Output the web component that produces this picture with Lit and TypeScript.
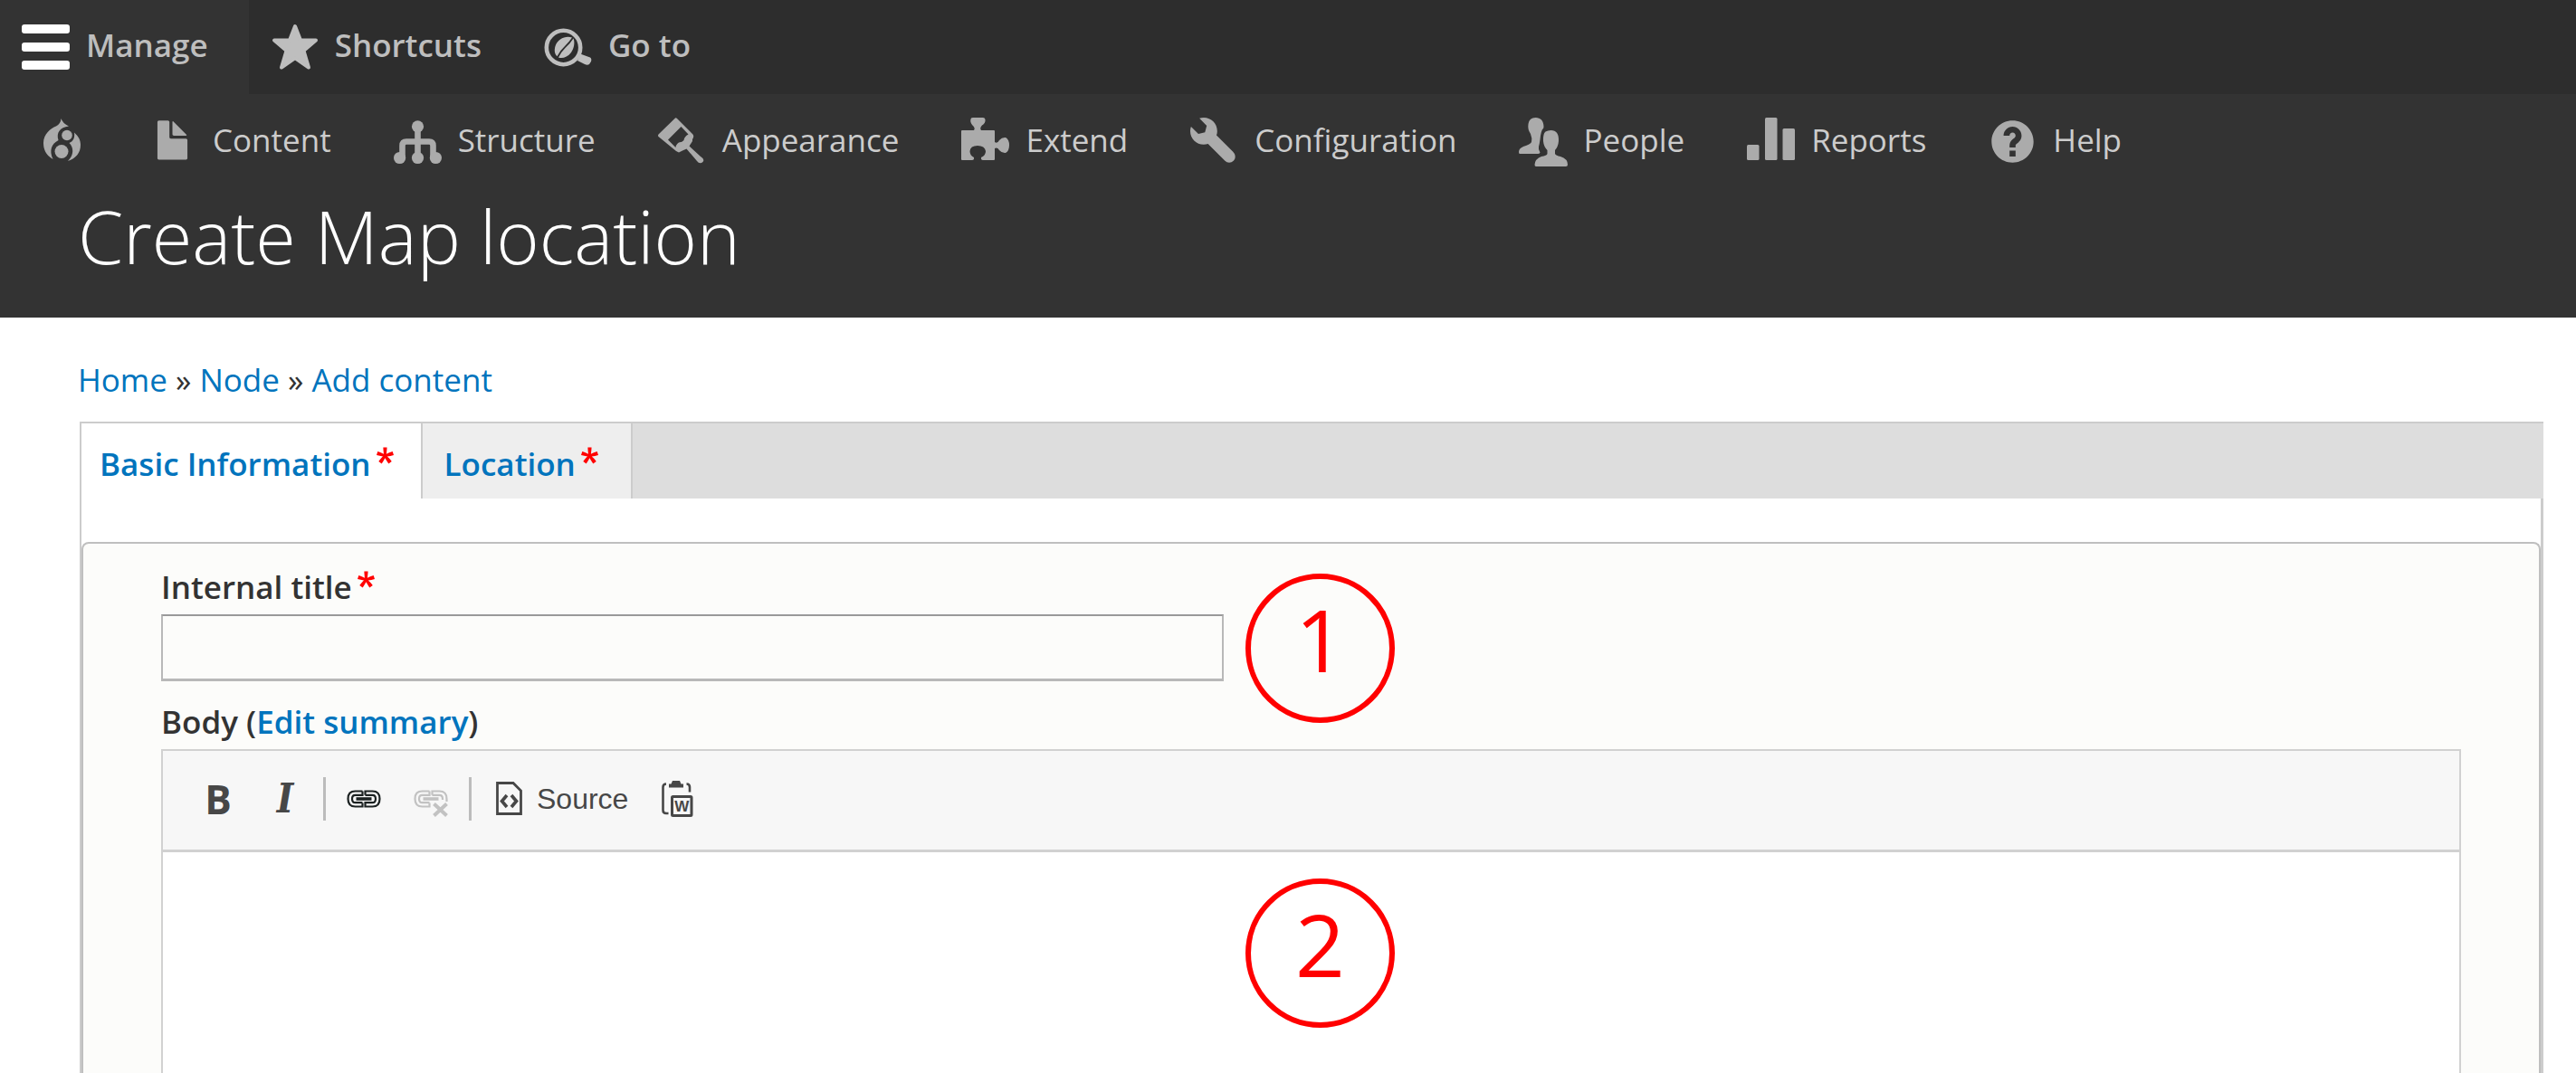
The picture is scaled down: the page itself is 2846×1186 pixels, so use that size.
import { LitElement, html, css, svg, nothing, TemplateResult } from "lit";
import { customElement, property, state } from "lit/decorators.js";

const glyphs: Record<string, TemplateResult> = {
  bars: svg`<rect x="0" y="1" width="53" height="10" rx="3"/><rect x="0" y="21" width="53" height="10" rx="3"/><rect x="0" y="41" width="53" height="10" rx="3"/>`,
  star: svg`<path d="M27 3L33 18.500H50L36.500 30L42 48.500L27 38L12 48.500L17.500 30L4 18.500H21Z" stroke="currentColor" stroke-width="4" stroke-linejoin="round"/>`,
  goto: svg`<circle cx="21.500" cy="26.500" r="18.700" fill="none" stroke="currentColor" stroke-width="4.600"/>
    <path d="M37 41L40 33.500L51 37.500Q53 39 52 42L50 45Q48 46.500 45 45Z"/>
    <path d="M31 15.500C24 13 15 17 12.500 25C11 30 12 34 14.500 36.200Q17.500 30 23 25Q28 20 31 15.500ZM32.500 16.500C34.500 21 33 28 30 32C26 37.500 20 39 16 37.500Q18.500 32 23.500 27Q29 22 32.500 16.500Z"/>`,
  drop: svg`<path d="M25.500 1Q27 6 34 9.500C24 10.500 20 17 22.500 25C15 29 12 36 16.500 46C8 41 6 34 6 28C6 18 14 12 20 9.500Q25 7 25.500 1Z"/>
    <circle cx="32" cy="19.500" r="5.800"/><circle cx="26" cy="37.500" r="7.500"/>
    <path d="M40 16.500C45 21 47 25 47 30C47 39 42 45 33 48C40 41 39.500 33 34.500 28C38.500 26.500 41 22.500 40 16.500Z"/>`,
  file: svg`<g transform="scale(3.3125)"><path d="M12.502 7h-5c-.276 0-.502-.225-.502-.5v-5c0-.275-.225-.5-.5-.5h-3c-.275 0-.5.225-.5.5v12.029c0 .275.225.5.5.5h9.002c.275 0 .5-.225.5-.5v-6.029c0-.275-.225-.5-.5-.5zM8.502 6h4c.275 0 .34-.159.146-.354l-4.293-4.292c-.195-.195-.353-.129-.353.146v4c0 .275.225.5.5.5z"/></g>`,
  chart: svg`<path d="M26.500 10V44M9.500 44V31Q9.500 26.500 14 26.500H39Q43.500 26.500 43.500 31V44" fill="none" stroke="currentColor" stroke-width="6.600"/>
    <circle cx="26.500" cy="9.800" r="6.600"/><circle cx="6.600" cy="44.500" r="6.600"/><circle cx="26.500" cy="44.500" r="6.600"/><circle cx="46.400" cy="44.500" r="6.600"/>`,
  brush: svg`<path fill-rule="evenodd" d="M19 .5Q20 0 21 1L38 18Q40.500 20 38 24V26L34.500 31.500L47 43Q52 46 49.500 49Q46 52 43 48L31.500 34.500L27 36.500L23 38.500L20 37L.5 21Q-.5 20 .5 18.500ZM25.500 10L11 24.500L19.500 33Q19.500 30 23 27.500Q27 27 28.500 25Q29 21 33.500 18.500Z"/>`,
  puzzle: svg`<path d="M0 15Q0 14 1 14H14Q16 11.500 12 8Q9 4 11 .5Q11.500 0 13 0H24Q26 0 26.500 2Q27 6 23 8.500Q20 11.500 22 14H36Q37 14 37 15V27Q40 29 42 25Q45 21.500 49 22Q53 24 53 30.500Q53 37 49 39Q45 39.500 42 36Q40 32.500 37 34V46Q37 47 36 47H24Q21.500 47 22 44Q27 42 27 37Q26 31 18 31Q10 31 9.500 37Q9.500 42 14 44Q14.500 47 12 47H1Q0 47 0 46Z"/>`,
  wrench: svg`<g transform="scale(3.3125)"><path d="M14.416 11.586l-.01-.008v-.001l-5.656-5.656c.15-.449.252-.921.252-1.421 0-2.485-2.016-4.5-4.502-4.5-.505 0-.981.102-1.434.255l2.431 2.431-.588 2.196-2.196.588-2.445-2.445c-.162.464-.268.956-.268 1.475 0 2.486 2.014 4.5 4.5 4.500.5 0 .972-.102 1.421-.251l5.667 5.665c.781.781 2.047.781 2.828 0s.781-2.047 0-2.828z"/></g>`,
  people: svg`<path d="M18.500 0C24 0 27.500 3.500 27.500 10Q27.500 12.500 26 13Q24.500 16 24 20Q23 29 22 32V35L23.500 38.500Q23 40 21 40H1Q0 40 0 38Q0 34 5 32Q13 29.500 14 27Q15 23 13 18Q9.500 13 10.500 7Q11.500 0 18.500 0Z"/>
    <path d="M35.500 14C41.500 14 44.500 18 44 26Q43.500 32 40 36V40Q41 42 46 43Q54 45.500 54 52Q54 54 52 54H19Q17.500 54 17.500 52Q18 45.500 25 43Q31 42 31.500 40V36Q27.500 32 27 26Q26.500 18 29.500 15.500Q32 14 35.500 14Z"/>`,
  reports: svg`<rect x="0" y="30" width="13.500" height="17" rx="1.500"/><rect x="20" y="0" width="13.500" height="47" rx="1.500"/><rect x="39.500" y="12" width="13.500" height="35" rx="1.500"/>`,
  help: svg`<g transform="scale(3.3125)"><path fill-rule="evenodd" d="M8.002 1c-3.868 0-7.002 3.134-7.002 7s3.134 7 7.002 7c3.865 0 7-3.134 7-7s-3.135-7-7-7zm3 5c0 .551-.16 1.085-.477 1.586l-.158.22c-.07.093-.189.241-.361.393-.168.148-.35.299-.545.447l-.203.189-.141.129-.096.17-.021.235v.63h-2.001v-.704c.026-.396.078-.73.204-.999.125-.269.271-.498.439-.688l.225-.21-.01-.015.176-.14.137-.128c.186-.139.357-.277.516-.417l.148-.18c.098-.152.168-.323.168-.518 0-.552-.447-1-1.001-1-.549 0-1.001.448-1.001 1h-1.998c0-1.657 1.343-3 3.001-3 1.655 0 2.998 1.343 2.998 3zm-1.998 7h-2v-2h2z"/></g>`,
};

const icon = (name: string) =>
  html`<svg class="icon" viewBox="0 0 53 53" fill="currentColor" aria-hidden="true">${glyphs[name]}</svg>`;

const required = html`<svg class="required" viewBox="0 0 16 16" role="img" aria-label="required">
  <path fill="#f00" d="M0 7.562l1.114-3.438c2.565.906 4.430 1.688 5.590 2.350C6.398 3.553 6.237 1.544 6.220.447h3.511c-.05 1.597-.234 3.600-.558 6.003c1.664-.838 3.566-1.613 5.714-2.325L16 7.562c-2.050.678-4.060 1.131-6.028 1.356c.984.856 2.372 2.381 4.166 4.575l-2.906 2.059c-.935-1.274-2.041-3.009-3.316-5.206c-1.194 2.275-2.244 4.013-3.147 5.206l-2.856-2.059c1.872-2.307 3.211-3.832 4.017-4.575C3.849 8.516 1.872 8.062 0 7.562"/>
</svg>`;

const links = {
  top: [
    { icon: "bars", label: "Manage", active: true },
    { icon: "star", label: "Shortcuts", active: false },
    { icon: "goto", label: "Go to", active: false },
  ],
  menu: [
    { icon: "file", label: "Content" },
    { icon: "chart", label: "Structure" },
    { icon: "brush", label: "Appearance" },
    { icon: "puzzle", label: "Extend" },
    { icon: "wrench", label: "Configuration" },
    { icon: "people", label: "People" },
    { icon: "reports", label: "Reports" },
    { icon: "help", label: "Help" },
  ],
};

@customElement("admin-toolbar")
class AdminToolbar extends LitElement {
  static styles = css`
    :host {
      display: block;
      color: #bebebe;
      font: 35px/48px "Open Sans", "Noto Sans", sans-serif;
    }
    .bar, .tray { display: flex; }
    .bar { background: #2d2d2d; font-weight: 600; }
    .tray { background: #333; padding-left: 18px; color: #ccc; }
    .item {
      display: flex;
      align-items: center;
      gap: 18px;
      padding: 0 45px 0 24px;
      color: inherit;
      text-decoration: none;
    }
    .bar .item { height: 104px; }
    .tray .item { height: 105px; }
    .name { padding-bottom: 4px; }
    .active { background: #333; }
    .active .icon { color: #fff; }
    .icon { width: 53px; height: 53px; flex: none; overflow: visible; }
    .tray .icon { color: #ababab; }
  `;

  render() {
    return html`
      <nav class="bar" aria-label="Toolbar">
        ${links.top.map(
          (l) => html`<a class="item ${l.active ? "active" : ""}" href="#">${icon(l.icon)}<span class="name">${l.label}</span></a>`
        )}
      </nav>
      <nav class="tray" aria-label="Administration menu">
        <a class="item" href="#" aria-label="Home">${icon("drop")}</a>
        ${links.menu.map((l) => html`<a class="item" href="#">${icon(l.icon)}<span class="name">${l.label}</span></a>`)}
      </nav>
    `;
  }
}

@customElement("step-marker")
class StepMarker extends LitElement {
  @property() value = "";
  static styles = css`
    :host {
      box-sizing: border-box;
      display: flex;
      justify-content: center;
      width: 165px;
      height: 165px;
      border: 6px solid #f00;
      border-radius: 50%;
      color: #f00;
      font: 500 96px/132px "Open Sans", "Noto Sans", sans-serif;
      pointer-events: none;
    }
  `;
  render() {
    return html`${this.value}`;
  }
}

@customElement("rich-editor")
class RichEditor extends LitElement {
  static styles = css`
    :host {
      display: flex;
      flex-direction: column;
      border: 2px solid #d1d1d1;
      border-bottom: 0;
      background: #fff;
    }
    .tools {
      box-sizing: border-box;
      display: flex;
      align-items: center;
      height: 112px;
      padding: 0 24px 4px;
      border-bottom: 3px solid #d1d1d1;
      background: #f7f7f7;
    }
    .tool {
      display: flex;
      align-items: center;
      justify-content: center;
      width: 74px;
      height: 74px;
      padding: 0;
      border: 0;
      background: none;
      color: #474747;
      font: 32px/48px "Liberation Sans", Arial, sans-serif;
    }
    .bold { font: bold 44px/48px "Open Sans", "Noto Sans", sans-serif; }
    .italic { font: italic bold 44px/48px "DejaVu Serif Condensed", "DejaVu Serif", serif; }
    .source { width: auto; gap: 16px; padding: 0 17px 0 22px; }
    .rule { width: 3px; height: 48px; margin: 0 5px; background: #bcbcbc; }
    .glyph { flex: none; overflow: visible; }
    .w { font: bold 17px "Liberation Sans", Arial, sans-serif; }
    .text {
      flex: 1;
      min-height: 200px;
      padding: 24px;
      border: 0;
      outline: 0;
      resize: none;
      background: #fff;
      color: #333;
      font: 32px/48px "Open Sans", "Noto Sans", sans-serif;
    }
  `;

  private link(unlink: boolean) {
    const ink = unlink ? "#c2c2c2" : "#1c2222";
    return html`<svg class="glyph" width="38" height="32" viewBox="0 0 38 32" fill="none" aria-hidden="true">
      <g stroke=${ink} stroke-width="2.200">
        <path d="M17.500 7.500H9.500Q1.500 7.500 1.500 16Q1.500 24.500 9.500 24.500H17.500V20.500"/>
        <path d="M17.500 7.500V11.800H9.500Q6 11.800 6 16Q6 20.200 9.500 20.200H17.500"/>
        <path d=${unlink
          ? "M20.500 11.800V7.500H28.500Q36.500 7.500 36.500 16V19M20.500 11.800H28.500Q32 11.800 32 16V17"
          : "M20.500 11.800V7.500H28.500Q36.500 7.500 36.500 16Q36.500 24.500 28.500 24.500H20.500V20.200H28.500Q32 20.200 32 16Q32 11.800 28.500 11.800H20.500"}/>
      </g>
      <path d="M10.500 16H27.500" stroke=${ink} stroke-width="3.600"/>
      ${unlink ? svg`<path d="M22.500 21.500L36.500 34.500M36.500 21.500L22.500 34.500" stroke=${ink} stroke-width="4"/>` : nothing}
    </svg>`;
  }

  render() {
    return html`
      <div class="tools" role="toolbar" aria-label="Formatting">
        <button class="tool bold" type="button" aria-label="Bold">B</button>
        <button class="tool italic" type="button" aria-label="Italic">I</button>
        <span class="rule"></span>
        <button class="tool" type="button" aria-label="Link">${this.link(false)}</button>
        <button class="tool" type="button" aria-label="Unlink" disabled>${this.link(true)}</button>
        <span class="rule"></span>
        <button class="tool source" type="button">
          <svg class="glyph" width="29" height="37" viewBox="0 0 29 37" fill="none" stroke="#474747" aria-hidden="true">
            <path d="M1.500 1.500H19L27.500 10V35.500H1.500Z" stroke-width="2.800"/>
            <path d="M12 15L6.500 21.500L12 28M17 15L22.500 21.500L17 28" stroke-width="3.600"/>
          </svg>
          <span>Source</span>
        </button>
        <button class="tool" type="button" aria-label="Paste from Word">
          <svg class="glyph" width="35" height="40" viewBox="0 0 35 40" fill="none" stroke="#474747" aria-hidden="true">
            <path d="M5 3.500Q1.500 3.500 1.500 7V32.500Q1.500 36 5 36H7.500M27.500 3.500Q31 3.500 31 7V12.500" stroke-width="2.600"/>
            <path d="M8 7.500V3.500H10.500L12 0H20L21.500 3.500H24V7.500Z" fill="#474747" stroke="none"/>
            <rect x="11.500" y="17.500" width="21.500" height="21" rx="1" stroke-width="3"/>
            <text class="w" x="22.250" y="34" text-anchor="middle" fill="#474747" stroke="none">W</text>
          </svg>
        </button>
      </div>
      <textarea class="text" aria-label="Body"></textarea>
    `;
  }
}

@customElement("app-root")
class AppRoot extends LitElement {
  @state() private tab = 0;

  static styles = css`
    :host {
      display: flex;
      flex-direction: column;
      min-height: 100vh;
      background: #fff;
      color: #333;
      font: 35px/48px "Open Sans", "Noto Sans", sans-serif;
    }
    .heading { padding: 0 86px 38px; background: #333; }
    .title { margin: 0; color: #fff; font-size: 81px; line-height: 104px; font-weight: 300; }
    .main {
      flex: 1;
      display: flex;
      flex-direction: column;
      padding: 45px 0 0;
    }
    .crumbs { padding: 0 86px 22px; }
    a, .link { color: #0074bd; text-decoration: none; }
    .tabs {
      display: flex;
      height: 83px;
      margin: 0 36px 0 88px;
      border-top: 2px solid #ccc;
      border-left: 2px solid #ccc;
      background: #ddd;
      font-weight: 600;
    }
    .tab {
      display: flex;
      align-items: center;
      gap: 6px;
      padding: 6px 36px 0 24px;
      border-right: 2px solid #ccc;
      background: #eee;
    }
    .tab.current { padding: 6px 30px 0 20px; background: #fff; }
    .required { width: 19px; height: 19px; margin-bottom: 18px; flex: none; }
    .panel {
      flex: 1;
      display: flex;
      flex-direction: column;
      margin: 0 36px 0 88px;
      padding-top: 48px;
      border: solid #ccc;
      border-width: 0 3px 0 2px;
    }
    .group {
      flex: 1;
      display: flex;
      flex-direction: column;
      gap: 21px;
      padding: 24px 86px 0;
      border: 2px solid #bfbfbf;
      border-bottom: 0;
      border-radius: 8px 8px 0 0;
      background: #fcfcfa;
    }
    .field { position: relative; display: flex; flex-direction: column; gap: 6px; }
    .body { flex: 1; }
    .label { display: flex; align-items: center; font-weight: 600; }
    .label .required { margin-left: 6px; }
    .link { padding: 0; border: 0; background: none; font: inherit; }
    .input {
      box-sizing: border-box;
      width: 1174px;
      max-width: 100%;
      height: 74px;
      padding: 0 20px;
      border: 2px solid #b8b8b8;
      border-top-color: #999;
      border-bottom-width: 3px;
      background: #fcfcfa;
      color: #333;
      font: inherit;
    }
    .editor { flex: 1; }
    .marker { position: absolute; left: 1198px; }
    .first { top: 9px; }
    .second { top: 197px; }
  `;

  private pick(e: Event, n: number) {
    e.preventDefault();
    this.tab = n;
  }

  render() {
    return html`
      <admin-toolbar></admin-toolbar>
      <header class="heading"><h1 class="title">Create Map location</h1></header>
      <main class="main">
        <nav class="crumbs" aria-label="Breadcrumb">
          <a href="#">Home</a> » <a href="#">Node</a> » <a href="#">Add content</a>
        </nav>
        <nav class="tabs" aria-label="Form sections">
          ${["Basic Information", "Location"].map(
            (name, n) => html`<a class="tab ${this.tab === n ? "current" : ""}" href="#" @click=${(e: Event) => this.pick(e, n)}
              ><span>${name}</span>${required}</a>`
          )}
        </nav>
        <form class="panel">
          <div class="group">
            <div class="field">
              <label class="label" for="title">Internal title${required}</label>
              <input class="input" id="title" type="text" />
              <step-marker class="marker first" value="1"></step-marker>
            </div>
            <div class="field body">
              <div class="label">Body&nbsp;(<button class="link" type="button">Edit summary</button>)</div>
              <rich-editor class="editor"></rich-editor>
              <step-marker class="marker second" value="2"></step-marker>
            </div>
          </div>
        </form>
      </main>
    `;
  }
}
